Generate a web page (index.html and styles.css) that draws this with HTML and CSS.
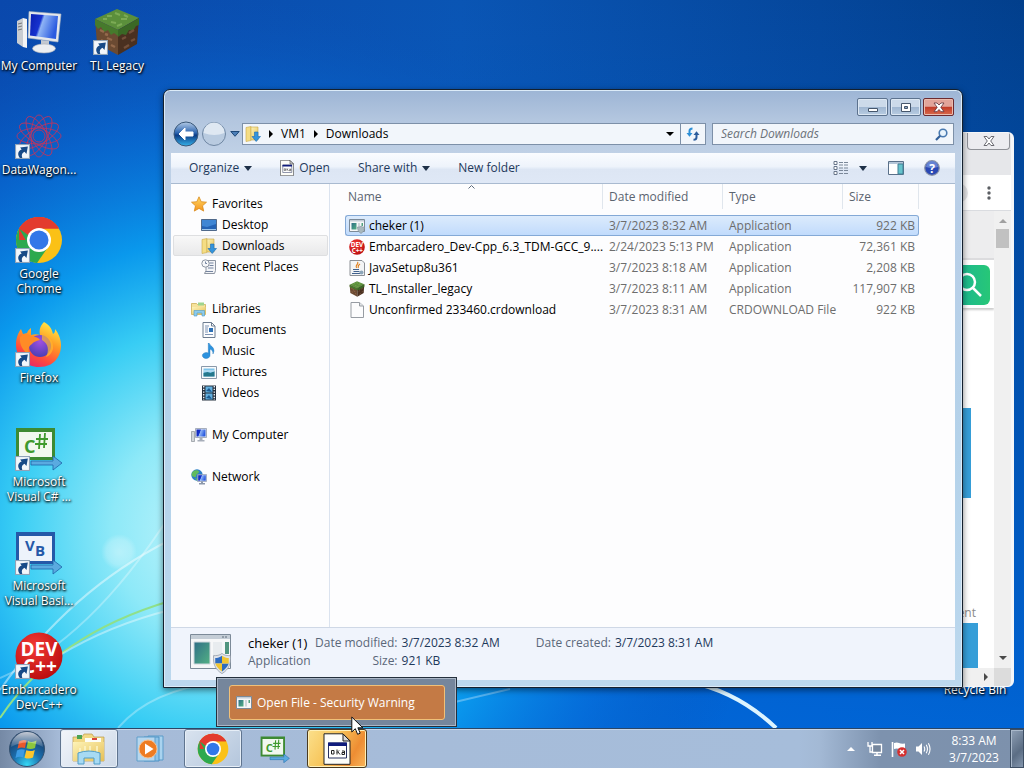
FILE: index.html
```html
<!DOCTYPE html>
<html lang="en">
<head>
<meta charset="utf-8">
<title>Downloads</title>
<link rel="stylesheet" href="styles.css">
</head>
<body>
<svg class="defs" aria-hidden="true">
  <defs>
    <linearGradient id="gScreen" x1="0" y1="0" x2="1" y2="0.3"><stop offset="0" stop-color="#0a1fb0"/><stop offset=".42" stop-color="#1733cf"/><stop offset=".5" stop-color="#8fb4f5"/><stop offset="1" stop-color="#2b5be0"/></linearGradient>
    <linearGradient id="gFolder" x1="0" y1="0" x2="1" y2="1"><stop offset="0" stop-color="#fdf3b8"/><stop offset="1" stop-color="#e6bf55"/></linearGradient>
    <linearGradient id="gStar" x1="0" y1="0" x2="0" y2="1"><stop offset="0" stop-color="#ffd965"/><stop offset="1" stop-color="#f5941d"/></linearGradient>
    <linearGradient id="gTeal" x1="0" y1="0" x2="1" y2="1"><stop offset="0" stop-color="#2f6f86"/><stop offset="1" stop-color="#53b184"/></linearGradient>
    <radialGradient id="gRed" cx=".4" cy=".3" r=".8"><stop offset="0" stop-color="#f23a34"/><stop offset="1" stop-color="#b5080b"/></radialGradient>
    <linearGradient id="gFox" x1=".8" y1="0" x2=".3" y2="1"><stop offset="0" stop-color="#fff14a"/><stop offset=".4" stop-color="#ff9a24"/><stop offset=".75" stop-color="#ff4a3d"/><stop offset="1" stop-color="#e9256b"/></linearGradient>
    <radialGradient id="gFoxBall" cx=".5" cy=".3" r=".7"><stop offset="0" stop-color="#a14fe0"/><stop offset="1" stop-color="#4b3fb5"/></radialGradient>
    <radialGradient id="gOrb" cx=".5" cy=".95" r=".9"><stop offset="0" stop-color="#35d8f5"/><stop offset=".45" stop-color="#1b6fae"/><stop offset="1" stop-color="#16345f"/></radialGradient>
    <linearGradient id="gGloss" x1="0" y1="0" x2="0" y2="1"><stop offset="0" stop-color="#fff" stop-opacity=".75"/><stop offset="1" stop-color="#fff" stop-opacity=".12"/></linearGradient>
    <linearGradient id="gBack" x1="0" y1="0" x2="0" y2="1"><stop offset="0" stop-color="#b4cbe6"/><stop offset=".45" stop-color="#2e66b1"/><stop offset=".55" stop-color="#0c3c86"/><stop offset="1" stop-color="#35b2ea"/></linearGradient>
    <linearGradient id="gArrow" x1="0" y1="0" x2="0" y2="1"><stop offset="0" stop-color="#8ed2f5"/><stop offset="1" stop-color="#1877c4"/></linearGradient>

    <symbol id="shortcut" viewBox="0 0 14 14"><rect x=".5" y=".5" width="13" height="13" fill="#f3f7fb" stroke="#8fa3b8"/><path d="M4.500 13C1.800 9.500 3 6.200 6.200 5.100L4.800 3.200 12 2.300 10.700 9.300 8.900 7.300C6.700 8.200 5.700 10 6.800 13Z" fill="#174a87"/></symbol>
    <symbol id="computer" viewBox="0 0 48 44"><path d="M2 11l6-3v29l-6-4z" fill="#c9cdd2"/><path d="M8 8l4 1v29l-4-1z" fill="#f3f4f5"/><path d="M3 14l4-1M3 17l4-1M3 20l4-1" stroke="#777"/><path d="M14 1.500L46 4 43 32 13 28z" fill="#e5e8ec" stroke="#aab3c0" stroke-width=".6"/><path d="M16 4L43 6 41 29 15 25.500z" fill="url(#gScreen)"/><path d="M26 30l8 1v6h-8z" fill="#c3c8d0"/><ellipse cx="29" cy="38.500" rx="11.500" ry="4.500" fill="#eceef1" stroke="#a8adb5" stroke-width=".6"/></symbol>
    <symbol id="cube" viewBox="0 0 48 48"><path d="M24 1L46 10 25 22 2 11z" fill="#5b8f3b"/><path d="M2 11l23 11v25L4 36z" fill="#6b4a32"/><path d="M25 22L46 10 44 36 25 47z" fill="#4a3020"/><path d="M2 11l23 11v6l-4-3-3 2-3-5-4 2-3-5-3 2-3-4z" fill="#467a2c"/><path d="M25 22L46 10v7l-3 1-3 5-4-1-3 5-4-1-4 3z" fill="#3a6825"/><path d="M14 8h5M22 5l5 2M28 11h6M18 14l5 1M31 7l4 2M10 11h4M24 18l5-2" stroke="#7cab55" stroke-width="2"/><path d="M7 22l4 2M14 30l5 2M8 32l4 2M18 37l4 2M12 26l3 1" stroke="#94694b" stroke-width="2.400"/><path d="M29 31l4-2M36 25l5-3M31 40l5-3M38 33l4-2" stroke="#74503a" stroke-width="2.400"/></symbol>
    <symbol id="chrome" viewBox="0 0 48 48"><circle cx="24" cy="24" r="23" fill="#fbc116"/><path d="M24 24L4.100 12.500A23 23 0 0 0 22 46.900L34 29.800z" fill="#2da94f"/><path d="M24 24H4.100V12.500A23 23 0 0 1 43.900 12.500H24z" fill="#e33b2e"/><path d="M4.100 12.500L14 29.800 24 24z" fill="#2da94f"/><path d="M4.100 12.500A23 23 0 0 1 43.900 12.500H24L13 19z" fill="#e33b2e"/><circle cx="24" cy="24" r="12" fill="#fff"/><circle cx="24" cy="24" r="9.500" fill="#3277e8"/></symbol>
    <symbol id="firefox" viewBox="0 0 48 48"><path d="M29 2c7 4 8 8 9 12 2-1 2-3 2-5 6 7 8 18 4 26-4 9-12 12-20 12C11 47 1 37 1 25 1 18 3 13 6 9l2 5 4-1c1-3 3-4 4-5v7c3-1 6-1 9 0-1-5 0-9 4-13z" fill="url(#gFox)"/><circle cx="25" cy="26" r="11" fill="url(#gFoxBall)"/><path d="M5 17c4-3 8-3 11-1 4 1 7 1 9 4-4 1-7 2-8 4-4 2-4 7-2 11C8 32 4 24 5 17z" fill="#ff8b26"/><path d="M27 15c7 0 12 6 11 14-1 4-4 7-7 8 3-6 3-13-4-17z" fill="#ffb52e" opacity=".7"/></symbol>
    <symbol id="atom" viewBox="0 0 48 44"><g fill="none" stroke="#c8325a" stroke-width=".8"><ellipse cx="24" cy="22" rx="22" ry="8"/><ellipse cx="24" cy="22" rx="22" ry="8" transform="rotate(30 24 22)"/><ellipse cx="24" cy="22" rx="22" ry="8" transform="rotate(60 24 22)"/><ellipse cx="24" cy="22" rx="21" ry="8" transform="rotate(90 24 22)"/><ellipse cx="24" cy="22" rx="22" ry="8" transform="rotate(120 24 22)"/><ellipse cx="24" cy="22" rx="22" ry="8" transform="rotate(150 24 22)"/><circle cx="24" cy="22" r="6"/></g></symbol>
    <symbol id="csharp" viewBox="0 0 48 44"><path d="M1 2h39v32H1z" fill="#3d8a33"/><path d="M4 6h33v25H4z" fill="#f1f8ef"/><text x="9" y="27" class="glyph glyph-green">C</text><path d="M25 8l-1 15M30 7l-1 15M21 13h12M20 18h12" stroke="#3f9a2e" stroke-width="1.800"/><path d="M16 35h22v-5l9 7-9 7v-5H16z" fill="#5aaae0" stroke="#1d66a9" stroke-width=".8"/></symbol>
    <symbol id="vbasic" viewBox="0 0 48 44"><path d="M1 2h39v32H1z" fill="#2559a8"/><path d="M4 6h33v25H4z" fill="#edf3fb"/><text x="10" y="21" class="glyph glyph-blue">V</text><text x="20" y="26" class="glyph glyph-blue">B</text><path d="M16 35h22v-5l9 7-9 7v-5H16z" fill="#5aaae0" stroke="#1d66a9" stroke-width=".8"/></symbol>
    <symbol id="devcpp" viewBox="0 0 48 48"><circle cx="24" cy="24" r="23.500" fill="url(#gRed)"/><text x="24" y="24" text-anchor="middle" class="glyph glyph-dev">DEV</text><text x="25" y="41" text-anchor="middle" class="glyph glyph-dev">C++</text></symbol>

    <symbol id="star" viewBox="0 0 16 16"><path d="M8 .8l2.200 4.900 5.300.5-4 3.600 1.200 5.300L8 12.400l-4.700 2.700 1.200-5.300-4-3.600 5.300-.5z" fill="url(#gStar)" stroke="#d98a1c" stroke-width=".8"/></symbol>
    <symbol id="desk" viewBox="0 0 16 16"><path d="M.5 2.500h15v11H.5z" fill="#2463b5" stroke="#50698a"/><path d="M1 3h14v4L6 10 1 9z" fill="#3f86d4"/><path d="M1 12h14v1H1z" fill="#9cc7ee"/></symbol>
    <symbol id="dl" viewBox="0 0 16 16"><path d="M1 1.500l5-1v14l-5 1z" fill="#f5dd84" stroke="#c9a848" stroke-width=".6"/><path d="M6 1h7v13H6z" fill="url(#gFolder)" stroke="#c9a848" stroke-width=".6"/><path d="M9.500 6h3.500v4.500h2.500l-4.300 5-4.200-5h2.500z" fill="#3594dc" stroke="#1c6db4" stroke-width=".6"/></symbol>
    <symbol id="recent" viewBox="0 0 16 16"><path d="M5 1.500h9.500v10l-1 3H3.500l1.500-3z" fill="#f3f4f7" stroke="#8d95a2"/><circle cx="4.500" cy="4.500" r="3.700" fill="#f7f8fa" stroke="#8d95a2"/><path d="M4.500 2.500v2H6M8.500 4h4M8.500 6.500h4M7 9h5.500M5 12.500h7" stroke="#7585a0" fill="none"/></symbol>
    <symbol id="library" viewBox="0 0 16 16"><path d="M.5 2.500h5l1 1h8v10H.5z" fill="#f6e29a" stroke="#c9a848" stroke-width=".7"/><path d="M7 1.500h6v3H7z" fill="#9ed48f"/><path d="M1 6h13.500v7H1z" fill="url(#gFolder)"/><path d="M3 9.500h10.500V15H11v-3H6v3H3z" fill="#8ccbed" stroke="#4e9bc7" stroke-width=".6"/></symbol>
    <symbol id="document" viewBox="0 0 16 16"><path d="M2 .5h8.500l3.500 3.500v11.500H2z" fill="#fbfcfe" stroke="#6d7c90"/><path d="M4 4h4M4 6h3M4 8h3M4 10h3M4 12.500h8" stroke="#7e93b3"/><path d="M8 6h4v4H8z" fill="#2d6fb5"/><path d="M10.500.5V4H14" fill="none" stroke="#6d7c90"/></symbol>
    <symbol id="music" viewBox="0 0 16 16"><path d="M8 0c1 3 5 3.500 5 8l-1 3c0-3-1-4-3-5v6.500A3.800 3 0 1 1 7.300 10V0z" fill="#2d93df" stroke="#1d6fb4" stroke-width=".4"/></symbol>
    <symbol id="picture" viewBox="0 0 16 16"><path d="M.5 2.500h15v12H.5z" fill="#f9fafb" stroke="#8a99aa"/><path d="M2.500 4.500h11v8h-11z" fill="#7fc4ea"/><path d="M2.500 9l4-1 3 1 4-2v5.500h-11z" fill="#25788c"/><path d="M2.500 7h11" stroke="#d9effb"/></symbol>
    <symbol id="video" viewBox="0 0 16 16"><path d="M1 .5h14v15H1z" fill="#25303e"/><path d="M4.500 1.500h7v6h-7zM4.500 8.500h7v6h-7z" fill="#62afdf"/><path d="M5 6l3-3 3 4zM5 13l3-3 3 4z" fill="#1b5b92"/><path d="M2.700 1v14M13.300 1v14" stroke="#e9eef3" stroke-width="1.400" stroke-dasharray="1.400 1.300"/></symbol>
    <symbol id="pc" viewBox="0 0 16 16"><path d="M.5 4.500h3v10h-3z" fill="#d3d6da" stroke="#8b9098" stroke-width=".7"/><path d="M4.500 1.500h11v9h-11z" fill="#e2e6ec" stroke="#8792a5" stroke-width=".7"/><path d="M5.500 2.500h9v7h-9z" fill="url(#gScreen)"/><path d="M8.500 11h3v2h2v1.500h-7V13h2z" fill="#a7aeb9"/></symbol>
    <symbol id="network" viewBox="0 0 16 16"><circle cx="6" cy="6" r="5.700" fill="#2d80c5"/><path d="M2 2.500c3-2 5-1 6 0S5 5 5 7s-2 1-4 0c-1-2 0-3 1-4.500zM4 9l3 1-1 2z" fill="#61bb5c"/><path d="M6.500 5.500h9v7h-9z" fill="#dfe5ee" stroke="#7a8aa5" stroke-width=".6"/><path d="M7.200 6.200h7.600v5.500H7.200z" fill="url(#gScreen)"/><path d="M10 12.500h2V14h2v1.500H8V14h2z" fill="#8c98ab"/></symbol>

    <symbol id="shield" viewBox="0 0 16 18"><path d="M8 0c2 2 5 2 7.500 2 .5 7-1 12-7.500 16C1.500 14 0 9 .5 2 3 2 6 2 8 0z" fill="#dfe3ea" stroke="#8b939f" stroke-width=".6"/><path d="M8 2v7H2V4c2 0 4-.5 6-2zM14 9H8v7c3-2 5-4 6-7z" fill="#2e6cc0"/><path d="M8 2v7h6V4c-2 0-4-.5-6-2zM2 9h6v7c-3-2-5-4-6-7z" fill="#f1c530"/></symbol>
    <symbol id="app" viewBox="0 0 16 16"><path d="M.5 1.500h15v12H.5z" fill="#f6f7f8" stroke="#7c8a98"/><path d="M1 2h14v1.500H1z" fill="#c4cdd6"/><path d="M2.500 5h5v6.500h-5z" fill="url(#gTeal)"/><path d="M9 5h2v6.500H9z" fill="#cfd6dc"/><path d="M12.500 5h1.500v3h-1.500z" fill="#50a27e"/></symbol>
    <symbol id="appuac" viewBox="0 0 16 16"><use href="#app" width="16" height="16"/><path d="M12 8c1 1 2 1 3.500 1 0 3-1 5-3.500 6.500C9.500 14 8.500 12 8.500 9c1.500 0 2.500 0 3.500-1z" fill="#a9b8bd" stroke="#7f8f98" stroke-width=".6"/></symbol>
    <symbol id="java" viewBox="0 0 16 16"><path d="M1 .5h12l2.500 2.500v12.500H1z" fill="#f3f4f5" stroke="#8c9096"/><path d="M8.500 2c2 2-3 3-1 6M11 4c-3 2-1 2-2 4" stroke="#e0801f" stroke-width="1.200" fill="none"/><path d="M4 9.500h6M4.500 11.500h6M3 13.500h8" stroke="#41628e"/><circle cx="12.500" cy="12.500" r="2" fill="#8ca5b9"/></symbol>
    <symbol id="blank" viewBox="0 0 16 16"><path d="M2 .5h8.500l4 3.500v11.500H2z" fill="#fcfcfd" stroke="#979ca3"/><path d="M10.500.5V4h4" fill="#e3e5e8" stroke="#979ca3"/></symbol>
    <symbol id="exe" viewBox="0 0 28 32"><path d="M1 .8h19l7 7v23.500H1z" fill="#fdfdf8" stroke="#222"/><path d="M20 1v7h7z" fill="#d9d9d9" stroke="#222"/><path d="M5.500 10h18v15h-18z" fill="#fff" stroke="#26305f"/><path d="M5 9.500h19v3.500H5z" fill="#101c7c"/><path d="M8.500 17.500h2.500v3.500H8.500zM14 16.500v5M14 19.500l2-2M15 19l2 2.500M19 18h2.500v3.500H19V19.500h2" fill="none" stroke="#222"/></symbol>
  </defs>
</svg>

<main class="desktop">
  <svg class="wallpaper" viewBox="0 0 1024 728" preserveAspectRatio="none" aria-hidden="true">
    <defs>
      <linearGradient id="w1" x1="0" y1="0" x2="1" y2="0"><stop offset="0" stop-color="#0a48ac"/><stop offset=".45" stop-color="#0a55b4"/><stop offset=".8" stop-color="#05479c"/><stop offset="1" stop-color="#023f8c"/></linearGradient>
      <linearGradient id="w2" x1="0" y1="0" x2="0" y2="1"><stop offset="0" stop-color="#0066d8" stop-opacity="0"/><stop offset="1" stop-color="#0068dc" stop-opacity=".9"/></linearGradient>
      <radialGradient id="w3" gradientUnits="userSpaceOnUse" cx="220" cy="530" r="540"><stop offset="0" stop-color="#c8f6fc"/><stop offset=".2" stop-color="#8ee9f8"/><stop offset=".38" stop-color="#38cdf4"/><stop offset=".54" stop-color="#0a9cef" stop-opacity=".95"/><stop offset=".76" stop-color="#0872dc" stop-opacity=".55"/><stop offset="1" stop-color="#0a50b4" stop-opacity="0"/></radialGradient>
      <radialGradient id="w4"><stop offset="0" stop-color="#fff" stop-opacity=".35"/><stop offset=".7" stop-color="#fff" stop-opacity=".22"/><stop offset="1" stop-color="#fff" stop-opacity="0"/></radialGradient>
    </defs>
    <rect width="1024" height="728" fill="url(#w1)"/>
    <rect width="1024" height="728" fill="url(#w2)"/>
    <rect width="1024" height="728" fill="url(#w3)"/>
    <circle cx="119" cy="552" r="18" fill="url(#w4)"/>
    <path d="M0 690Q70 590 170 540" fill="none" stroke="#fff" stroke-opacity=".45" stroke-width="2"/>
    <path d="M0 678Q90 640 170 515" fill="none" stroke="#fff" stroke-opacity=".3" stroke-width="2"/>
    <path d="M0 718Q55 635 170 601" fill="none" stroke="#8fe08a" stroke-width="2"/>
    <path d="M60 655Q110 625 170 610" fill="none" stroke="#fff" stroke-opacity=".4" stroke-width="2"/>
    <path d="M118 728Q150 690 220 682" fill="none" stroke="#fff" stroke-opacity=".3" stroke-width="2"/>
    <path d="M455 702L510 689" stroke="#fff" stroke-opacity=".3" stroke-width="2"/>
    <path d="M690 682Q738 692 776 728" fill="none" stroke="#dcf4ff" stroke-width="4"/>
  </svg>

  <ul class="icons">
    <li><a href="#" class="shortcut"><svg class="art"><use href="#computer"/></svg><span>My Computer</span></a></li>
    <li><a href="#" class="shortcut"><svg class="art"><use href="#atom"/></svg><svg class="badge"><use href="#shortcut"/></svg><span>DataWagon...</span></a></li>
    <li><a href="#" class="shortcut"><svg class="art"><use href="#chrome"/></svg><svg class="badge"><use href="#shortcut"/></svg><span>Google Chrome</span></a></li>
    <li><a href="#" class="shortcut"><svg class="art"><use href="#firefox"/></svg><svg class="badge"><use href="#shortcut"/></svg><span>Firefox</span></a></li>
    <li><a href="#" class="shortcut"><svg class="art"><use href="#csharp"/></svg><svg class="badge"><use href="#shortcut"/></svg><span>Microsoft Visual C# ...</span></a></li>
    <li><a href="#" class="shortcut"><svg class="art"><use href="#vbasic"/></svg><svg class="badge"><use href="#shortcut"/></svg><span>Microsoft Visual Basi...</span></a></li>
    <li><a href="#" class="shortcut"><svg class="art"><use href="#devcpp"/></svg><svg class="badge"><use href="#shortcut"/></svg><span>Embarcadero Dev-C++</span></a></li>
  </ul>
  <ul class="icons">
    <li><a href="#" class="shortcut"><svg class="art"><use href="#cube"/></svg><svg class="badge"><use href="#shortcut"/></svg><span>TL Legacy</span></a></li>
  </ul>
  <a href="#" class="bin">Recycle Bin</a>

  <section class="browser" aria-label="Browser">
    <header class="browser-tabs"><button class="browser-close" aria-label="Close browser"><svg width="12" height="10" viewBox="0 0 12 10"><path d="M1 .5h3L6 3 8 .5h3L7.700 5 11 9.500H8L6 7 4 9.500H1L4.300 5z" fill="#fff" stroke="#6b6b72"/></svg></button></header>
    <div class="browser-bar"><i class="avatar"></i><button class="dots" aria-label="Menu"><svg width="4" height="14" viewBox="0 0 4 14" fill="#5b5e63"><circle cx="2" cy="2" r="1.700"/><circle cx="2" cy="7" r="1.700"/><circle cx="2" cy="12" r="1.700"/></svg></button></div>
    <div class="browser-body">
      <div class="site">
        <div class="site-band"></div>
        <div class="site-search"><button class="site-go" aria-label="Search site"><svg width="26" height="26" viewBox="0 0 26 26" fill="none" stroke="#fff" stroke-width="2.500"><circle cx="10" cy="10" r="8"/><path d="M15.500 15.500L24 24"/></svg></button></div>
        <div class="site-block"></div>
        <p class="site-text">ent</p>
        <div class="site-foot"></div>
      </div>
      <div class="vscroll"><svg width="8" height="4" viewBox="0 0 8 4"><path d="M0 4l4-4 4 4z" fill="#a0a0a0"/></svg><i class="thumb"></i><svg class="end" width="8" height="4" viewBox="0 0 8 4"><path d="M0 0l4 4 4-4z" fill="#4a4a4a"/></svg></div>
    </div>
    <div class="hscroll"><svg width="4" height="8" viewBox="0 0 4 8"><path d="M0 0l4 4-4 4z" fill="#4a4a4a"/></svg><i></i></div>
  </section>

  <section class="window" aria-label="Downloads">
    <header class="titlebar">
      <button class="cap" aria-label="Minimize"><svg width="12" height="11" viewBox="0 0 12 11"><path d="M1.500 6.500h9v3h-9z" fill="#fff" stroke="#45566c"/></svg></button>
      <button class="cap" aria-label="Maximize"><svg width="12" height="11" viewBox="0 0 12 11"><path d="M1.500 1.500h9v8h-9z" fill="#fff" stroke="#45566c"/><path d="M4.500 4.500h3v2h-3z" fill="#8ea8c6" stroke="#45566c"/></svg></button>
      <button class="cap cap-close" aria-label="Close"><svg width="12" height="11" viewBox="0 0 12 11"><path d="M1 1h3l2 2 2-2h3L7.800 5.300 11 9.700H8L6 7.500 4 9.700H1l3.200-4.400z" fill="#fff" stroke="#5e3038" stroke-width=".8"/></svg></button>
    </header>
    <nav class="navrow" aria-label="Address">
      <button class="navbtn" aria-label="Back"><svg width="26" height="26" viewBox="0 0 26 26"><circle cx="13" cy="13" r="12" fill="url(#gBack)" stroke="#3b5878"/><path d="M6 13l6-6v4h8v4h-8v4z" fill="#fff" stroke="#fff" stroke-linejoin="round"/></svg></button>
      <button class="navbtn" aria-label="Forward"><svg width="26" height="26" viewBox="0 0 26 26"><circle cx="13" cy="13" r="11.500" fill="#b9cbe0" stroke="#6f87a3"/><path d="M2.500 12a10.500 10.500 0 0 1 21 0q-10 4-21 0z" fill="#dfe8f2"/></svg></button>
      <button class="navbtn recentbtn" aria-label="Recent pages"><svg width="10" height="6" viewBox="0 0 10 6"><path d="M.8.5h8.400L5 5.300z" fill="#4c7fb8" stroke="#1f4878"/></svg></button>
      <div class="address">
        <svg class="ico"><use href="#dl"/></svg>
        <svg width="4" height="8" viewBox="0 0 4 8"><path d="M0 0l4 4-4 4z"/></svg>
        <button class="crumb">VM1</button>
        <svg width="4" height="8" viewBox="0 0 4 8"><path d="M0 0l4 4-4 4z"/></svg>
        <button class="crumb">Downloads</button>
        <button class="drop" aria-label="Previous locations"><svg width="8" height="4" viewBox="0 0 8 4"><path d="M0 0h8L4 4z"/></svg></button>
        <button class="refresh" aria-label="Refresh"><svg width="14" height="14" viewBox="0 0 14 14" fill="none" stroke-width="2"><path d="M6.500 1.500Q3.500 1.500 3.500 4v3" stroke="#2d8fd6"/><path d="M.5 6h6l-3 3.800z" fill="#2d8fd6"/><path d="M7.500 12.800q3 0 3-2.500V7" stroke="#2c5c9c"/><path d="M7.500 8h6l-3-3.800z" fill="#2c5c9c"/></svg></button>
      </div>
      <label class="search"><input type="text" placeholder="Search Downloads" aria-label="Search Downloads"><svg width="13" height="13" viewBox="0 0 13 13" fill="none"><circle cx="8" cy="5" r="3.800" stroke="#4a7ab0" stroke-width="1.600" fill="#e9f4fd"/><path d="M5.200 7.800L1 12" stroke="#33609a" stroke-width="2.200"/></svg></label>
    </nav>

    <div class="client">
      <div class="toolbar">
        <button>Organize <svg width="8" height="5" viewBox="0 0 8 5"><path d="M0 0h8L4 5z"/></svg></button>
        <button class="t-open"><svg class="exe"><use href="#exe"/></svg>Open</button>
        <button>Share with <svg width="8" height="5" viewBox="0 0 8 5"><path d="M0 0h8L4 5z"/></svg></button>
        <button>New folder</button>
        <span class="grow"></span>
        <button aria-label="Change view" class="t-view"><svg width="16" height="14" viewBox="0 0 16 14"><g fill="#fff" stroke="#68768a"><path d="M1 .5h3v3H1zM1 5.500h3v3H1zM1 10.500h3v3H1z"/></g><path d="M6 1.500h4M11 1.500h4M6 4h4M11 4h4M6 7h4M11 7h4M6 9.500h4M11 9.500h4M6 12.500h4M11 12.500h4" stroke="#7a8798"/></svg><svg width="8" height="5" viewBox="0 0 8 5"><path d="M0 0h8L4 5z"/></svg></button>
        <button aria-label="Preview pane"><svg width="16" height="14" viewBox="0 0 16 14"><path d="M.5.500h15v13H.5z" fill="#fff" stroke="#5a7089"/><path d="M1 1h14v2H1z" fill="#b5c6d8"/><path d="M10 3h5v10h-5z" fill="#66c3cc" stroke="#407f95"/></svg></button>
        <button aria-label="Help"><svg width="16" height="16" viewBox="0 0 16 16"><circle cx="8" cy="8" r="7.300" fill="#2a48b4" stroke="#8a93a8" stroke-width="1.200"/><path d="M2 7a6 6 0 0 1 12 0Q8 9 2 7z" fill="#7f9be0" opacity=".7"/><text x="8" y="12.500" text-anchor="middle" class="glyph glyph-help">?</text></svg></button>
      </div>

      <div class="panes">
        <nav class="tree" aria-label="Folders">
          <ul>
            <li><a href="#"><svg class="ico"><use href="#star"/></svg>Favorites</a></li>
            <li><a href="#" class="child"><svg class="ico"><use href="#desk"/></svg>Desktop</a></li>
            <li><a href="#" class="child current"><svg class="ico"><use href="#dl"/></svg>Downloads</a></li>
            <li><a href="#" class="child"><svg class="ico"><use href="#recent"/></svg>Recent Places</a></li>
          </ul>
          <ul>
            <li><a href="#"><svg class="ico"><use href="#library"/></svg>Libraries</a></li>
            <li><a href="#" class="child"><svg class="ico"><use href="#document"/></svg>Documents</a></li>
            <li><a href="#" class="child"><svg class="ico"><use href="#music"/></svg>Music</a></li>
            <li><a href="#" class="child"><svg class="ico"><use href="#picture"/></svg>Pictures</a></li>
            <li><a href="#" class="child"><svg class="ico"><use href="#video"/></svg>Videos</a></li>
          </ul>
          <ul><li><a href="#"><svg class="ico"><use href="#pc"/></svg>My Computer</a></li></ul>
          <ul><li><a href="#"><svg class="ico"><use href="#network"/></svg>Network</a></li></ul>
        </nav>
        <div class="files">
          <table>
            <colgroup><col class="c-name"><col class="c-date"><col class="c-type"><col class="c-size"></colgroup>
            <thead><tr><th class="sorted">Name<svg width="7" height="4" viewBox="0 0 7 4"><path d="M.5 3.500l3-3 3 3" fill="none" stroke="#5d6b7c"/></svg></th><th>Date modified</th><th>Type</th><th>Size</th></tr></thead>
            <tbody>
              <tr class="selected"><td><span><svg class="ico"><use href="#appuac"/></svg>cheker (1)</span></td><td>3/7/2023 8:32 AM</td><td>Application</td><td>922 KB</td></tr>
              <tr><td><span><svg class="ico"><use href="#devcpp"/></svg>Embarcadero_Dev-Cpp_6.3_TDM-GCC_9....</span></td><td>2/24/2023 5:13 PM</td><td>Application</td><td>72,361 KB</td></tr>
              <tr><td><span><svg class="ico"><use href="#java"/></svg>JavaSetup8u361</span></td><td>3/7/2023 8:18 AM</td><td>Application</td><td>2,208 KB</td></tr>
              <tr><td><span><svg class="ico"><use href="#cube"/></svg>TL_Installer_legacy</span></td><td>3/7/2023 8:11 AM</td><td>Application</td><td>117,907 KB</td></tr>
              <tr><td><span><svg class="ico"><use href="#blank"/></svg>Unconfirmed 233460.crdownload</span></td><td>3/7/2023 8:31 AM</td><td>CRDOWNLOAD File</td><td>922 KB</td></tr>
            </tbody>
          </table>
        </div>
      </div>

      <footer class="details">
        <svg class="big" viewBox="0 0 44 44"><path d="M1.500 3.500h40v34h-40z" fill="#f6f7f8" stroke="#7c8a98"/><path d="M2 4h39v4H2z" fill="#c4cdd6"/><path d="M33 6h2M36 6h2" stroke="#5f6c7a"/><path d="M5 11h16v22H5z" fill="url(#gTeal)" stroke="#cfd6dc"/><path d="M24 11h9v22h-9z" fill="#e8ecef"/><path d="M36 11h4v12h-4z" fill="#50957e"/><use href="#shield" x="24" y="22" width="18" height="21"/></svg>
        <dl class="meta">
          <div class="m-name"><dt>cheker (1)</dt><dd>Application</dd></div>
          <div class="m-pair"><dt>Date modified:</dt><dd>3/7/2023 8:32 AM</dd><dt>Size:</dt><dd>921 KB</dd></div>
          <div class="m-pair"><dt>Date created:</dt><dd>3/7/2023 8:31 AM</dd></div>
        </dl>
      </footer>
    </div>
  </section>

  <div class="preview"><button><svg class="ico"><use href="#app"/></svg>Open File - Security Warning</button></div>
</main>

<footer class="taskbar">
  <button class="start" aria-label="Start"><svg width="38" height="38" viewBox="0 0 38 38"><circle cx="19" cy="19" r="17.500" fill="url(#gOrb)" stroke="#33506f"/><path d="M11 11.500q4-2.500 7.500-1L17 18q-4-1.500-7.500.8z" fill="#e9572b"/><path d="M20 11q4 2 8.500-.5L27 18q-4 2-8.500.3z" fill="#8cc63c"/><path d="M9 20.500q4-2 7.800-.7L15 27.300q-3.500-1.500-7.500.7z" fill="#3b9be4"/><path d="M18.300 20.300q4 1.800 8.500-.4L25 27.500q-4 2-8.500.2z" fill="#fcc62d"/><path d="M3 17a16 15 0 0 1 32 0Q19 8 3 17z" fill="url(#gGloss)"/></svg></button>
  <div class="apps">
    <button class="open" aria-label="Windows Explorer"><svg width="34" height="32" viewBox="0 0 34 32"><path d="M1 4h9l2-3h8l2 3h10v24H1z" fill="#f2d985" stroke="#b99a4a" stroke-width=".7"/><path d="M5 2h5v4H5z" fill="#4aa352"/><path d="M13 5h16v5H13z" fill="#fdfdf5"/><path d="M20 5h5v2h-5z" fill="#d8433a"/><path d="M1 9h31v19H1z" fill="url(#gFolder)"/><path d="M8 15v10M13 13v10M18 13v10M25 13v10" stroke="#fcf6cb" stroke-width="1.500"/><path d="M6 20q11-4 22 0v11h-6v-6H12v6H6z" fill="#a7daf3" stroke="#4f9dc8"/></svg></button>
    <button aria-label="Media Player"><svg width="30" height="28" viewBox="0 0 30 28"><path d="M12 1h15v24H12z" fill="#a9d3ef" stroke="#5a9bc9"/><path d="M8 2h15v24H8z" fill="#8ec4e8" stroke="#4f92c4"/><path d="M1 2h18v24H1z" fill="#b7d7ee" stroke="#5f9ecb"/><circle cx="12" cy="14" r="9" fill="#ee7c22" stroke="#f7c08e"/><path d="M9 8.500v11l8.500-5.500z" fill="#fff"/></svg></button>
    <button class="open" aria-label="Google Chrome"><svg width="32" height="32"><use href="#chrome"/></svg></button>
    <button aria-label="Visual C#"><svg width="30" height="28"><use href="#csharp"/></svg></button>
    <button class="alert" aria-label="Security Warning"><svg width="28" height="32"><use href="#exe"/></svg></button>
  </div>
  <div class="tray">
    <button aria-label="Show hidden icons"><svg width="8" height="4" viewBox="0 0 8 4"><path d="M0 4l4-4 4 4z" fill="#fff"/></svg></button>
    <button aria-label="Network"><svg width="16" height="16" viewBox="0 0 16 16"><path d="M5.500 3.500h9v8h-9z" fill="#76879d" stroke="#fff" stroke-width="1.300"/><path d="M7 14.200h7M10 12v2" stroke="#fff" stroke-width="1.500"/><path d="M1 1v4h4V1M3 5v6h2" fill="none" stroke="#fff" stroke-width="1.300"/></svg></button>
    <button aria-label="Action Center"><svg width="16" height="16" viewBox="0 0 16 16"><path d="M1.500 1v15" stroke="#fff" stroke-width="1.600"/><path d="M3 2q3-1 5 0t6 .500V9Q10 9 8 8T3 8z" fill="#fff"/><circle cx="11" cy="11" r="4.800" fill="#d5302f"/><path d="M9 9l4 4M13 9l-4 4" stroke="#fff" stroke-width="1.500"/></svg></button>
    <button aria-label="Volume"><svg width="16" height="16" viewBox="0 0 16 16"><path d="M1 5.500h2.500L7 2v12l-3.500-3.500H1z" fill="#fff"/><path d="M9 5.500q1.500 2.500 0 5M11.200 3.800q2.500 4.200 0 8.400M13.400 2.200q3.300 5.800 0 11.600" fill="none" stroke="#fff" stroke-width="1.100"/></svg></button>
    <time class="clock" datetime="2023-03-07T08:33">8:33 AM<br>3/7/2023</time>
  </div>
  <button class="peek" aria-label="Show desktop"></button>
</footer>

<svg class="cursor" width="13" height="20" viewBox="0 0 13 20" aria-hidden="true"><path d="M.8 1v15l3.500-3.300 2.300 5.600 2.600-1.100-2.300-5.400h4.900z" fill="#fff" stroke="#111"/></svg>
</body>
</html>
```

FILE: styles.css
```css
* { box-sizing: border-box; }
html, body { height: 100%; margin: 0; }
body {
  display: flex;
  flex-direction: column;
  overflow: hidden;
  font: 12px/16px "Open Sans", "Noto Sans", sans-serif;
  color: #000;
}
ul, dl, dd, p { margin: 0; padding: 0; list-style: none; }
a { color: inherit; text-decoration: none; }
button { border: 0; padding: 0; background: none; font: inherit; color: inherit; }
svg { display: block; flex: none; text-shadow: none; }
.defs { position: absolute; width: 0; height: 0; }
.ico { width: 16px; height: 16px; }
.glyph { font-family: "Open Sans", sans-serif; font-weight: 700; }
.glyph-green { font-size: 18px; fill: #3f9a2e; }
.glyph-blue { font-size: 15px; fill: #2559a8; }
.glyph-dev { font-size: 19px; fill: #fff; }
.glyph-help { font-size: 12px; fill: #fff; }

/* Desktop */
.desktop { position: relative; flex: 1; min-height: 0; display: flex; align-items: flex-start; overflow: hidden; }
.wallpaper { position: absolute; inset: 0; width: 100%; height: 100%; }
.icons { position: relative; display: grid; grid-auto-rows: 104px; width: 78px; }
.shortcut {
  position: relative;
  display: flex;
  flex-direction: column;
  align-items: center;
  gap: 2px;
  padding-top: 8px;
  line-height: 15px;
  text-align: center;
  color: #fff;
}
.shortcut span, .bin { text-shadow: 1px 1px 2px #000, 0 1px 3px #000; }
.art { width: 48px; height: 48px; }
.badge { position: absolute; left: 15px; top: 40px; width: 15px; height: 15px; }
.bin { position: absolute; right: 10px; bottom: 31px; width: 78px; text-align: center; line-height: 15px; color: #fff; }

/* Browser window behind */
.browser {
  position: absolute;
  inset: 132px 10px 41px 40%;
  display: flex;
  flex-direction: column;
  border: 1px solid #f4f6f9;
  border-right-width: 3px;
  border-radius: 6px;
  background: #e6e7ea;
  overflow: hidden;
}
.browser-tabs { height: 42px; display: flex; justify-content: flex-end; align-items: flex-start; padding-right: 1px; }
.browser-close { width: 43px; height: 17px; display: flex; align-items: center; justify-content: center; border: 1px solid #8f9197; border-top: 0; border-radius: 0 0 4px 4px; background: #ececf0; }
.browser-bar { height: 36px; display: flex; align-items: center; justify-content: flex-end; gap: 19px; padding-right: 20px; background: #fff; border-bottom: 1px solid #dadce0; }
.avatar { width: 20px; height: 20px; border-radius: 50%; background: #e4e4e6; }
.browser-body { flex: 1; min-height: 0; display: flex; }
.site { flex: 1; display: flex; flex-direction: column; align-items: flex-end; background: #fff; }
.site-band { width: 100%; height: 49px; background: #ededee; border-bottom: 2px solid #dcdcde; }
.site-search { width: 100%; height: 48px; display: flex; justify-content: flex-end; padding: 5px 4px 3px; box-shadow: 0 2px 2px #ccc; }
.site-go { width: 60px; height: 40px; display: flex; align-items: center; justify-content: flex-end; padding-right: 7px; border-radius: 6px; background: linear-gradient(90deg, #12a8a8, #27c777); }
.site-block { width: 200px; height: 90px; margin: 100px 23px 0 0; background: #369ed8; }
.site-text { margin: auto 18px 0 0; padding-bottom: 2px; color: #8b8b8b; }
.site-foot { width: 200px; height: 45px; margin-right: 16px; background: #369ed8; }
.vscroll { width: 17px; display: flex; flex-direction: column; align-items: center; padding: 8px 0; background: #f0f0f0; }
.thumb { width: 13px; height: 19px; margin-top: 6px; background: #c1c1c1; }
.vscroll .end { margin-top: auto; }
.hscroll { height: 18px; display: flex; align-items: center; justify-content: flex-end; gap: 6px; background: #f0f0f0; }
.hscroll i { width: 17px; height: 18px; background: #dcdcdc; }

/* Explorer window */
.window {
  position: absolute;
  inset: 89px 61px 40px 163px;
  display: flex;
  flex-direction: column;
  padding: 0 7px 7px;
  border: 1px solid #14202e;
  border-radius: 7px 7px 0 0;
  background: linear-gradient(180deg, #9db5d5 0, #b3c6df 30px, #c0d1e6 64px, #b9cfe8 120px, #b4d2ea 60%, #bcd8ee 100%);
  box-shadow: inset 0 0 0 1px #dcebf8, 0 2px 6px rgba(0, 0, 0, .5);
}
.titlebar { height: 32px; display: flex; justify-content: flex-end; gap: 2px; padding: 8px 1px 0 0; }
.cap { width: 31px; height: 18px; display: flex; align-items: center; justify-content: center; border: 1px solid #5c728e; border-radius: 2px; background: linear-gradient(#ccdaea 0 48%, #9fb6d1 50%, #b8cce2); box-shadow: inset 0 0 0 1px #dce7f3; }
.cap-close { border-color: #6c2a30; background: linear-gradient(#e2a49a 0 46%, #c23a28 50%, #d86a4c); box-shadow: inset 0 0 0 1px #eabcae; }
.navrow { display: flex; align-items: center; height: 24px; margin-bottom: 7px; padding: 0 1px; }
.navbtn { width: 28px; display: flex; justify-content: center; }
.recentbtn { width: 14px; }
.address, .search { height: 22px; display: flex; align-items: center; border: 1px solid #7d90a8; background: #f2f6fb; }
.address { flex: 1; gap: 8px; min-width: 0; padding-left: 2px; }
.crumb { white-space: nowrap; }
.drop { margin-left: auto; }
.refresh { width: 25px; align-self: stretch; display: flex; align-items: center; justify-content: center; border-left: 1px solid #7d90a8; margin-left: -2px; }
.search { flex: 0 0 242px; margin-left: 6px; padding-right: 5px; }
.search input { flex: 1; min-width: 0; border: 0; outline: 0; padding: 0 8px; background: none; font: inherit; font-style: italic; }
.search input::placeholder { color: #6b7179; opacity: 1; }

.client { flex: 1; min-height: 0; display: flex; flex-direction: column; background: #fdfdfe; }
.toolbar { height: 31px; display: flex; align-items: center; gap: 28px; padding: 0 15px 0 18px; background: linear-gradient(#fafcff 0, #eef3fb 45%, #dde6f4 55%, #dfe8f6); border-bottom: 1px solid #a9bad0; color: #1e395b; }
.toolbar button { display: flex; align-items: center; gap: 5px; white-space: nowrap; }
.toolbar svg { fill: #1e3048; }
.exe { width: 14px; height: 16px; }
.grow { flex: 1; }
.toolbar .t-view { gap: 10px; margin-right: -7px; }
.toolbar button:last-child { margin-left: -8px; }
.panes { flex: 1; min-height: 0; display: flex; }
.tree { flex: 0 0 159px; padding-top: 9px; border-right: 1px solid #dbe3ef; }
.tree ul { margin-bottom: 21px; }
.tree a { display: flex; align-items: center; gap: 5px; height: 21px; padding-left: 20px; white-space: nowrap; }
.tree .child { padding-left: 30px; }
.tree .current { margin: 0 1px 0 2px; padding-left: 27px; border: 1px solid #dedfe1; border-radius: 2px; background: linear-gradient(#f8f8f8, #e9e9ea); }
.files { flex: 1; min-width: 0; padding-left: 15px; }
table { width: 574px; table-layout: fixed; border-collapse: separate; border-spacing: 0; color: #6d6d6d; }
.c-name { width: 258px; }
.c-date, .c-type { width: 120px; }
.c-size { width: 76px; }
th {
  position: relative;
  height: 31px;
  padding: 0 0 5px 6px;
  border: 0 solid transparent;
  border-right-width: 1px;
  border-image: linear-gradient(#e0e6ed 0 78%, transparent 78%) 1;
  font-weight: 400;
  text-align: left;
  color: #5b6470;
}
th:first-child { padding-left: 3px; }
.sorted svg { position: absolute; left: 50%; top: 1px; margin-left: -6px; }
td { height: 21px; padding: 0 0 0 6px; border: 0 solid transparent; border-width: 1px 0; white-space: nowrap; }
td:first-child { padding-left: 4px; color: #000; }
td:last-child { padding: 0 4px 0 0; text-align: right; }
td span { display: flex; align-items: center; gap: 4px; }
.selected td { background: linear-gradient(#dcebfc, #c1dbfc); border-color: #84a9d6; }
.selected td:first-child { border-left-width: 1px; padding-left: 3px; border-radius: 3px 0 0 3px; }
.selected td:last-child { border-right-width: 1px; padding-right: 3px; border-radius: 0 3px 3px 0; }

.details { height: 53px; display: flex; align-items: flex-start; gap: 15px; padding: 3px 18px; border-top: 1px solid #cfd8e6; background: #f0f4fc; color: #5a6779; }
.big { width: 44px; height: 44px; }
.meta { display: flex; padding-top: 3px; line-height: 18px; }
.m-name { width: 67px; }
.m-name dt { font-size: 13px; color: #000; white-space: nowrap; }
.m-pair { display: grid; grid-template-columns: auto auto; grid-auto-rows: 18px; column-gap: 4px; margin-right: 36px; white-space: nowrap; }
.m-pair dt { text-align: right; }
.m-pair dd { color: #1e395b; }

/* Taskbar thumbnail */
.preview { position: absolute; left: 216px; bottom: 1px; width: 241px; height: 50px; padding: 7px 11px 6px 12px; border: 1px solid #25303d; background: #75869c; box-shadow: inset 0 0 0 1px #aab6c6; }
.preview button { width: 100%; height: 35px; display: flex; align-items: center; gap: 5px; padding: 0 6px; border: 1px solid #f0c078; border-radius: 3px; background: #c47a45; color: #fff; white-space: nowrap; }

/* Taskbar */
.taskbar { height: 40px; flex: none; display: flex; border-top: 1px solid #2b4666; background: linear-gradient(90deg, #7589a5 0, #a6bbd8 60px, #a6bdda 78%, #a3b9d5 80%, #7d92ae 86%, #7d91ac 100%); box-shadow: inset 0 1px 0 #c5d5e8; }
.start { width: 54px; display: flex; align-items: center; justify-content: center; }
.apps { flex: 1; display: flex; gap: 4px; padding-left: 6px; }
.apps button { width: 58px; height: 39px; display: flex; align-items: center; justify-content: center; border: 1px solid transparent; border-radius: 3px; }
.apps .open { border-color: #5f748f; background: linear-gradient(135deg, #d9e3ef, #b4c6dc); box-shadow: inset 0 0 0 1px #e6eef7; }
.apps .open:first-child { background: linear-gradient(135deg, #f2f5fa, #cdd9e8); }
.apps .alert { width: 60px; margin-left: -1px; border-color: #4a3a20; background: linear-gradient(120deg, #fbe08c, #f7c65c 40%, #ee8d33 75%, #f9b65a); box-shadow: inset 0 0 0 1px #fff0b8; }
.tray { display: flex; align-items: center; gap: 8px; color: #fff; }
.tray button:first-child { margin-right: 4px; }
.clock { width: 68px; padding-left: 2px; line-height: 17px; text-align: center; }
.peek { width: 14px; margin-left: 3px; border: 1px solid #3e4f64; background: linear-gradient(135deg, #8fa0b6, #5b6d84 60%, #8496ad); box-shadow: inset 1px 1px 0 #a9b8ca; }
.cursor { position: fixed; left: 351px; bottom: 32px; }
```
